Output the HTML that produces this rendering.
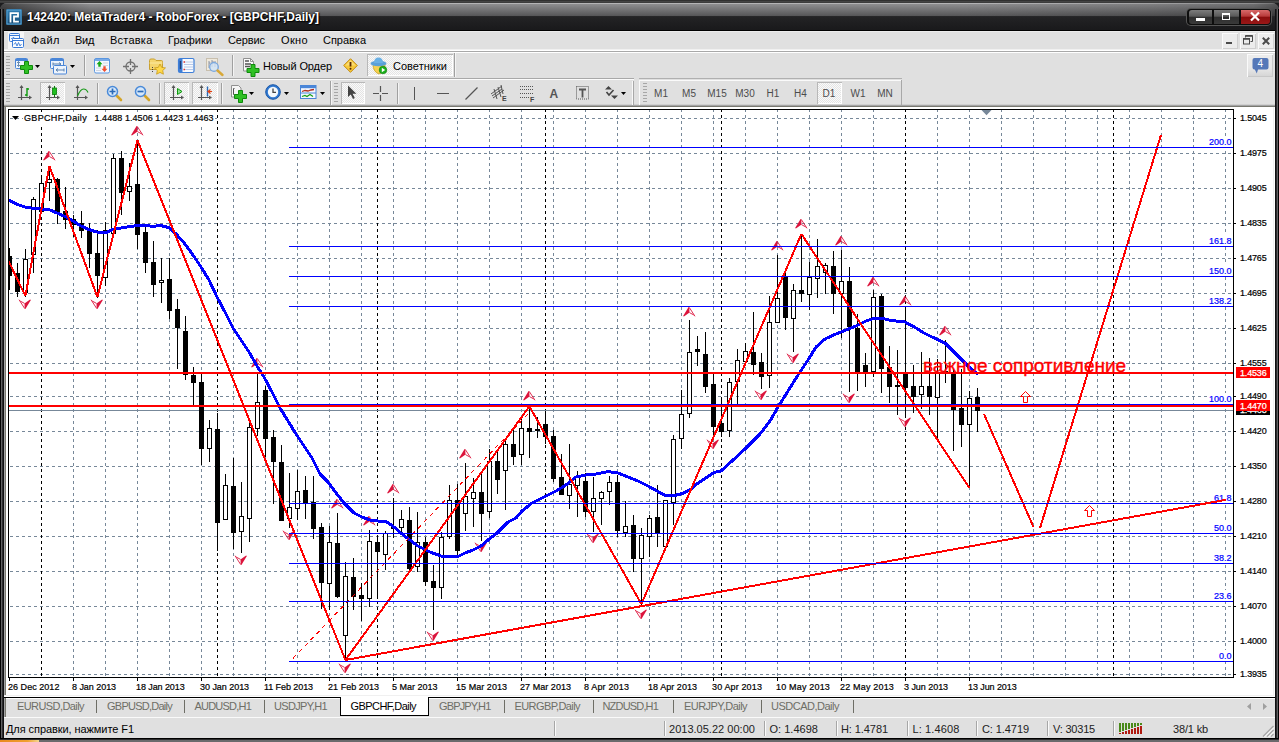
<!DOCTYPE html>
<html lang="ru"><head><meta charset="utf-8"><title>142420: MetaTrader4 - RoboForex - [GBPCHF,Daily]</title>
<style>
html,body{margin:0;padding:0}
body{width:1279px;height:742px;overflow:hidden;position:relative;background:#1a1a1a;font-family:"Liberation Sans",sans-serif;}
.t{position:absolute;white-space:pre;margin:0;padding:0}
.r{position:absolute}
svg{position:absolute;left:0;top:0}
.ic{position:absolute;overflow:visible}
</style></head><body>
<div class="r" style="left:0px;top:0px;width:1279px;height:742px;background:#1c1c1e;"></div>
<div class="r" style="left:0px;top:0px;width:1279px;height:1px;background:#303030;"></div>
<div class="r" style="left:0px;top:1px;width:1279px;height:1px;background:#444;"></div>
<div class="r" style="left:0px;top:2px;width:1279px;height:1px;background:#3c3c3c;"></div>
<div class="r" style="left:0px;top:3px;width:1279px;height:28px;background:linear-gradient(#b4b4b6 0,#b4b4b6 1px,#8e8e90 1px,#555557 13px,#2a2a2c 13px,#232325 14px,#1a1a1c 26px,#1a1a1c 27px,#000 27px);border-radius:7px 7px 0 0;"></div>
<div class="r" style="left:0px;top:3px;width:90px;height:13px;background:linear-gradient(90deg,rgba(0,0,0,.5) 0,rgba(0,0,0,.35) 30%,rgba(0,0,0,0) 100%);border-radius:7px 0 0 0;"></div>
<div class="r" style="left:960px;top:3px;width:319px;height:13px;background:linear-gradient(90deg,rgba(0,0,0,0) 0,rgba(0,0,0,.1) 60%,rgba(0,0,0,.22) 92%,rgba(0,0,0,.4) 100%);border-radius:0 7px 0 0;"></div>
<div class="r" style="left:0px;top:9px;width:4px;height:733px;background:linear-gradient(90deg,#000 0,#000 1px,#606062 1px,#606062 2px,#2c2c2e 2px,#2c2c2e 3px,#101012 3px);"></div>
<div class="r" style="left:1275px;top:9px;width:4px;height:733px;background:linear-gradient(90deg,#101012 0,#101012 1px,#2c2c2e 1px,#2c2c2e 2px,#606062 2px,#606062 3px,#000 3px);"></div>
<div class="r" style="left:0px;top:738px;width:1279px;height:4px;background:linear-gradient(#000 0,#000 1px,#2c2c2e 1px,#2c2c2e 2px,#6a6a6c 2px,#6a6a6c 4px);"></div>
<div class="r" style="left:0px;top:740px;width:39px;height:2px;background:linear-gradient(90deg,#e88a20 0,#f0a030 70%,#f4d890 100%);"></div>
<svg class="ic" style="left:6px;top:9px" width="16" height="16" viewBox="0 0 16 16"><defs><linearGradient id="ig" x1="0" y1="0" x2="0" y2="1"><stop offset="0" stop-color="#2f7fb4"/><stop offset="1" stop-color="#144a76"/></linearGradient></defs><rect x="0" y="0" width="16" height="16" rx="1.5" fill="#155a8a"/><rect x="1" y="1" width="14" height="14" fill="url(#ig)" stroke="#62a6d4" stroke-width="1"/><path d="M4.500 13.500V4.200h7.500v3.300H8v5.200h4.900" fill="none" stroke="#fff" stroke-width="1.800"/></svg>
<span class="t " style="left:27px;top:9px;font-size:12px;line-height:16px;color:#fff;letter-spacing:-0.001px;font-weight:bold;text-shadow:1px 1px 1px #000,0 0 2px #000;">142420: MetaTrader4 - RoboForex - [GBPCHF,Daily]</span>
<div class="r" style="left:1187px;top:9px;width:84px;height:16px;border-radius:4px;background:#0e0e0e;box-shadow:0 0 0 1px #555"></div>
<div class="r" style="left:1189px;top:10px;width:23px;height:14px;background:linear-gradient(#7c7c7c 0,#5a5a5a 45%,#2e2e2e 50%,#3a3a3a 100%);border-radius:3px 0 0 3px;"></div>
<div class="r" style="left:1214px;top:10px;width:25px;height:14px;background:linear-gradient(#7c7c7c 0,#5a5a5a 45%,#2e2e2e 50%,#3a3a3a 100%);"></div>
<div class="r" style="left:1241px;top:10px;width:29px;height:14px;background:linear-gradient(#d86a6a 0,#b83a3a 45%,#8a0c0c 50%,#9a1818 100%);border-radius:0 3px 3px 0;"></div>
<div class="r" style="left:1196px;top:18px;width:9px;height:3px;background:#fff;"></div>
<div class="r" style="left:1222px;top:13px;width:6px;height:4px;border:1.5px solid #fff;border-top-width:2.5px"></div>
<svg class="ic" style="left:1250px;top:12px" width="10" height="9" viewBox="0 0 10 9"><path d="M1 0.5L9 8.5M9 0.5L1 8.5" stroke="#fff" stroke-width="2.2"/></svg>
<div class="r" style="left:4px;top:31px;width:1271px;height:1px;background:#ececec;"></div>
<div class="r" style="left:4px;top:32px;width:1271px;height:17px;background:#e0e0e0;"></div>
<div class="r" style="left:4px;top:49px;width:1271px;height:1px;background:#f0f0f0;"></div>
<div class="r" style="left:4px;top:50px;width:1271px;height:1px;background:#fff;"></div>
<div class="r" style="left:4px;top:51px;width:1271px;height:1px;background:#a8a8a8;"></div>
<div class="r" style="left:4px;top:52px;width:1271px;height:1px;background:#fff;"></div>
<div class="r" style="left:8px;top:32px;width:16px;height:17px;background:#f6f6f6;"></div>
<svg class="ic" style="left:9px;top:33px" width="15" height="15" viewBox="0 0 15 15" fill="none" stroke="#3a7ad6"><rect x="0.5" y="0.5" width="10" height="8" rx="1" fill="#f4f8ff"/><path d="M0.5 2.500h10"/><path d="M2 5.500h1.500l1-1.500 1 3 1-1.500h1" stroke-width=".8"/><rect x="3.5" y="5.5" width="11" height="9" rx="1" fill="#fafcff"/><path d="M3.500 7.500h11"/><path d="M5 11.500l1.500-2 1.500 3.500 1.500-3.500 1.500 3.500 1.500-2" stroke-width=".9"/></svg>
<span class="t " style="left:31px;top:33px;font-size:11px;line-height:15px;color:#000;letter-spacing:0.488px;">Файл</span>
<span class="t " style="left:75px;top:33px;font-size:11px;line-height:15px;color:#000;letter-spacing:-0.302px;">Вид</span>
<span class="t " style="left:110px;top:33px;font-size:11px;line-height:15px;color:#000;letter-spacing:0.230px;">Вставка</span>
<span class="t " style="left:168px;top:33px;font-size:11px;line-height:15px;color:#000;letter-spacing:0.040px;">Графики</span>
<span class="t " style="left:228px;top:33px;font-size:11px;line-height:15px;color:#000;letter-spacing:-0.112px;">Сервис</span>
<span class="t " style="left:281px;top:33px;font-size:11px;line-height:15px;color:#000;letter-spacing:0.355px;">Окно</span>
<span class="t " style="left:323px;top:33px;font-size:11px;line-height:15px;color:#000;letter-spacing:-0.022px;">Справка</span>
<div class="r" style="left:1222px;top:33px;width:16px;height:16px;background:#ececec;box-shadow:inset 1px 1px 0 #fafafa, inset -1px -1px 0 #cfcfcf;"></div>
<div class="r" style="left:1240px;top:33px;width:16px;height:16px;background:#ececec;box-shadow:inset 1px 1px 0 #fafafa, inset -1px -1px 0 #cfcfcf;"></div>
<div class="r" style="left:1258px;top:33px;width:16px;height:16px;background:#ececec;box-shadow:inset 1px 1px 0 #fafafa, inset -1px -1px 0 #cfcfcf;"></div>
<div class="r" style="left:1226px;top:42px;width:6px;height:2px;background:#4a4a4a;"></div>
<svg class="ic" style="left:1243px;top:35px" width="10" height="10" viewBox="0 0 10 10" fill="none" stroke="#4a4a4a"><path d="M2.5 2.5v-2h7v6h-2" stroke-width="1"/><path d="M2.5 1h7" stroke-width="1.6"/><rect x="0.5" y="3.5" width="6" height="5.5"/><path d="M0.5 4h6" stroke-width="1.6"/></svg>
<svg class="ic" style="left:1262px;top:37px" width="8" height="8" viewBox="0 0 8 8"><path d="M0.8 0.8L7.2 7.2M7.2 0.8L0.8 7.2" stroke="#4a4a4a" stroke-width="2"/></svg>
<div class="r" style="left:4px;top:53px;width:1271px;height:27px;background:#e0e0e0;"></div>
<div class="r" style="left:4px;top:78px;width:630px;height:1px;background:#a8a8a8;"></div>
<div class="r" style="left:4px;top:79px;width:630px;height:1px;background:#fbfbfb;"></div>
<div class="r" style="left:639px;top:78px;width:263px;height:1px;background:#b0b0b0;"></div>
<div class="r" style="left:4px;top:78px;width:0px;height:0px;background:#e0e0e0;"></div>
<div class="r" style="left:4px;top:80px;width:1271px;height:25px;background:#e0e0e0;"></div>
<div class="r" style="left:4px;top:104px;width:1271px;height:1px;background:#d0d0d0;"></div>
<div class="r" style="left:4px;top:105px;width:1271px;height:1px;background:#a4a4a4;"></div>
<div class="r" style="left:4px;top:106px;width:1271px;height:1px;background:#787870;"></div>
<div class="r" style="left:6px;top:56px;width:4px;height:20px;background:repeating-linear-gradient(#a6a6a6 0,#a6a6a6 1px,transparent 1px,transparent 3px);"></div>
<div class="r" style="left:6px;top:83px;width:4px;height:20px;background:repeating-linear-gradient(#a6a6a6 0,#a6a6a6 1px,transparent 1px,transparent 3px);"></div>
<svg class="ic" style="left:15px;top:58px" width="17" height="16" viewBox="0 0 17 16"><rect x="0.5" y="0.5" width="12" height="10" rx="1" fill="#eef4fc" stroke="#4a86d8"/><path d="M0.5 2h12" stroke="#4a86d8" stroke-width="2"/><path d="M3.5 3.5v5M2 5l1.5-1.5L5 5M2 7l1.5 1.5L5 7" stroke="#6a8cb0" fill="none"/><path d="M9.5 3.5h4v4h4v4h-4v4h-4v-4h-4v-4h4z" fill="#2fc024" stroke="#0e8a0c" stroke-width="1"/></svg>
<svg class="ic" style="left:35px;top:65px" width="5" height="3" viewBox="0 0 5 3"><path d="M0 0h5L2.5 3z" fill="#000"/></svg>
<svg class="ic" style="left:50px;top:58px" width="18" height="17" viewBox="0 0 18 17"><rect x="0.5" y="0.5" width="13" height="10" rx="1" fill="#eef4fc" stroke="#4a86d8"/><path d="M0.5 2h13" stroke="#4a86d8" stroke-width="2"/><path d="M3 6h8M9 4.5l2 1.5-2 1.5M3 4.5v3" stroke="#5a82b0" fill="none"/><rect x="3.5" y="7.5" width="13" height="8.5" rx="1" fill="#eef4fc" stroke="#4a86d8"/><path d="M6 12h8M8 10.5l-2 1.5 2 1.5M14 10.5v3" stroke="#5a82b0" fill="none"/></svg>
<svg class="ic" style="left:70px;top:65px" width="5" height="3" viewBox="0 0 5 3"><path d="M0 0h5L2.5 3z" fill="#000"/></svg>
<div class="r" style="left:84px;top:55px;width:1px;height:21px;background:#a0a0a0;"></div>
<div class="r" style="left:85px;top:55px;width:1px;height:21px;background:#f4f4f4;"></div>
<svg class="ic" style="left:94px;top:58px" width="17" height="16" viewBox="0 0 17 16"><rect x="0.5" y="0.5" width="15" height="14.5" rx="1.5" fill="#f4f8ff" stroke="#5a96e0"/><path d="M0.5 2h15" stroke="#5a96e0" stroke-width="1.6"/><path d="M9 5h5M9 7.5h5M2 10h5M2 12.5h5" stroke="#d0d6e0"/><path d="M5.5 3l3 3.2h-1.8v2.6h-2.4V6.200h-1.800z" fill="#18a818"/><path d="M10.5 14l-3-3.2h1.800V8.200h2.400v2.600h1.800z" fill="#f05030"/></svg>
<svg class="ic" style="left:123px;top:59px" width="16" height="16" viewBox="0 0 16 16"><circle cx="7.500" cy="7.500" r="4.500" fill="none" stroke="#707070" stroke-width="1.300"/><path d="M7.500 0v6M7.500 9v6M0 7.500h6M9 7.500h6" stroke="#707070" stroke-width="1.300"/></svg>
<svg class="ic" style="left:149px;top:58px" width="18" height="17" viewBox="0 0 18 17"><path d="M0.5 2.500q0-1.500 1.500-1.500h3.500l1.500 1.500h5.500q1 0 1 1v8h-13z" fill="#f5d670" stroke="#c9a030"/><path d="M0.500 5h13" stroke="#fbe9a0"/><path d="M11 6l1.700 3.400 3.800.5-2.800 2.600.7 3.700-3.400-1.800-3.400 1.800.7-3.700-2.800-2.600 3.800-.5z" fill="#ffd84a" stroke="#c89a18" stroke-width=".8"/><path d="M3.500 9v6" stroke="#444" stroke-dasharray="1 1"/></svg>
<svg class="ic" style="left:178px;top:58px" width="17" height="16" viewBox="0 0 17 16"><rect x="0.5" y="0.5" width="15.500" height="14" rx="1.500" fill="#f8fbff" stroke="#3f7fd8" stroke-width="1.200"/><rect x="1" y="1" width="3.500" height="13" fill="#3f7fd8"/><path d="M6 4h9M6 6.500h9M6 9h9M6 11.500h9" stroke="#b8c8e8"/><path d="M2.500 3v8" stroke="#203a70" stroke-width="1.400"/><path d="M5.500 4h1.500M5.500 11.500h1.500" stroke="#e03030" stroke-width="1.400"/></svg>
<svg class="ic" style="left:206px;top:58px" width="19" height="18" viewBox="0 0 19 18"><rect x="0.500" y="0.500" width="11" height="12" fill="#efe9dc" stroke="#c8bfae"/><path d="M3 3v7M3 5h1.500M6 2v7M6 4h2M9 3v6" stroke="#8a94a8"/><circle cx="8" cy="9" r="4.300" fill="#cfe3f8" fill-opacity=".800" stroke="#7aa8e0" stroke-width="1.300"/><path d="M11.500 12.500l5 4.500" stroke="#d8a838" stroke-width="2.400" stroke-linecap="round"/></svg>
<div class="r" style="left:232px;top:55px;width:1px;height:21px;background:#a0a0a0;"></div>
<div class="r" style="left:233px;top:55px;width:1px;height:21px;background:#f4f4f4;"></div>
<svg class="ic" style="left:243px;top:58px" width="17" height="17" viewBox="0 0 17 17"><path d="M0.500 0.500h7l3 3v9.500h-10z" fill="#fafafa" stroke="#909090"/><path d="M7.500 0.500v3h3" fill="none" stroke="#909090"/><path d="M2 3h4M2 6h6M2 8.500h5" stroke="#555" stroke-width="1.300"/><path d="M8 6.5h4v4h4v4h-4v4h-4v-4h-4v-4h4z" fill="#2fc024" stroke="#0e8a0c" stroke-width="1"/></svg>
<span class="t " style="left:263px;top:58.5px;font-size:11px;line-height:15px;color:#000;letter-spacing:-0.102px;">Новый Ордер</span>
<svg class="ic" style="left:343px;top:58px" width="16" height="16" viewBox="0 0 16 16"><path d="M7.500 0.700L14.300 7.500 7.500 14.300 0.700 7.500z" fill="#f7c93a" stroke="#c28a10" stroke-linejoin="round"/><path d="M7.500 2.200L12.800 7.500H2.200z" fill="#fde58a" opacity=".700"/><path d="M7.500 4v4.500" stroke="#5a2a00" stroke-width="1.800"/><circle cx="7.500" cy="10.700" r="1" fill="#5a2a00"/></svg>
<div class="r" style="left:367px;top:54px;width:86px;height:22px;background:#f2f2f2;box-shadow:inset 1px 1px 0 #b8b8b8, inset -1px -1px 0 #fff;background-image:repeating-conic-gradient(#e4e4e4 0 25%,#fafafa 0 50%);background-size:2px 2px;"></div>
<svg class="ic" style="left:370px;top:57px" width="18" height="18" viewBox="0 0 18 18"><path d="M3 7q0 8 6 10 6-2 6-10z" fill="#f5d050" stroke="#c8a028" stroke-width=".800"/><ellipse cx="8.500" cy="6.500" rx="8" ry="2.800" fill="#5aa0d8"/><path d="M4 6q0-5.500 4.500-5.500T13 6z" fill="#6ab0e4"/><circle cx="13" cy="13" r="3.800" fill="#1cb01c" stroke="#0a7a0a" stroke-width=".600"/><path d="M11.800 10.800v4.400l3.400-2.200z" fill="#fff"/></svg>
<span class="t " style="left:393px;top:58.5px;font-size:11px;line-height:15px;color:#000;letter-spacing:0.028px;">Советники</span>
<div class="r" style="left:454px;top:53px;width:1px;height:24px;background:#a0a0a0;"></div>
<div class="r" style="left:455px;top:53px;width:1px;height:24px;background:#f4f4f4;"></div>
<svg class="ic" style="left:18px;top:85px" width="15" height="16" viewBox="0 0 15 16"><path d="M3.500 1v14M0 12.500h13" stroke="#555" stroke-width="1.200" fill="none"/><path d="M3.500 0l-2 3h4zM14 12.500l-3-2v4z" fill="#555"/><path d="M9 3v8.500M9 4h2M7 10h2" stroke="#0c9a0c" stroke-width="1.400" fill="none"/></svg>
<div class="r" style="left:40px;top:82px;width:25px;height:22px;background:#f2f2f2;box-shadow:inset 1px 1px 0 #b8b8b8, inset -1px -1px 0 #fff;background-image:repeating-conic-gradient(#e4e4e4 0 25%,#fafafa 0 50%);background-size:2px 2px;"></div>
<svg class="ic" style="left:46px;top:85px" width="15" height="16" viewBox="0 0 15 16"><path d="M3.500 1v14M0 12.500h13" stroke="#555" stroke-width="1.200" fill="none"/><path d="M3.500 0l-2 3h4zM14 12.500l-3-2v4z" fill="#555"/><path d="M8.500 1v11" stroke="#0a7a0a"/><rect x="6.500" y="3" width="4" height="6.500" fill="#20c020" stroke="#0a7a0a" stroke-width=".800"/></svg>
<svg class="ic" style="left:74px;top:85px" width="15" height="16" viewBox="0 0 15 16"><path d="M3.500 1v14M0 12.500h13" stroke="#555" stroke-width="1.200" fill="none"/><path d="M3.500 0l-2 3h4zM14 12.500l-3-2v4z" fill="#555"/><path d="M3.500 11q3-7 6-7t4.500 3.500" stroke="#1a9a1a" stroke-width="1.200" fill="none"/></svg>
<div class="r" style="left:97px;top:83px;width:1px;height:21px;background:#a0a0a0;"></div>
<div class="r" style="left:98px;top:83px;width:1px;height:21px;background:#f4f4f4;"></div>
<svg class="ic" style="left:106px;top:85px" width="16" height="16" viewBox="0 0 16 16"><path d="M10.500 10.500l4.500 4.500" stroke="#d4a428" stroke-width="2.600" stroke-linecap="round"/><circle cx="6.500" cy="6.500" r="5" fill="#d6e8fa" stroke="#4a8ad8" stroke-width="1.500"/><path d="M3.500 6.500h6M6.500 3.500v6" stroke="#2a6ab8" stroke-width="1.700"/></svg>
<svg class="ic" style="left:134px;top:85px" width="16" height="16" viewBox="0 0 16 16"><path d="M10.500 10.500l4.500 4.500" stroke="#d4a428" stroke-width="2.600" stroke-linecap="round"/><circle cx="6.500" cy="6.500" r="5" fill="#d6e8fa" stroke="#4a8ad8" stroke-width="1.500"/><path d="M3.500 6.500h6" stroke="#2a6ab8" stroke-width="1.700"/></svg>
<div class="r" style="left:159px;top:83px;width:1px;height:21px;background:#a0a0a0;"></div>
<div class="r" style="left:160px;top:83px;width:1px;height:21px;background:#f4f4f4;"></div>
<div class="r" style="left:164px;top:82px;width:25px;height:22px;background:#f2f2f2;box-shadow:inset 1px 1px 0 #b8b8b8, inset -1px -1px 0 #fff;background-image:repeating-conic-gradient(#e4e4e4 0 25%,#fafafa 0 50%);background-size:2px 2px;"></div>
<svg class="ic" style="left:170px;top:85px" width="15" height="16" viewBox="0 0 15 16"><path d="M3.500 1v14M0 12.500h13" stroke="#555" stroke-width="1.200" fill="none"/><path d="M3.500 0l-2 3h4zM14 12.500l-3-2v4z" fill="#555"/><path d="M7.500 3.500v6l4.500-3z" fill="#8ee08e" stroke="#0c9a0c"/></svg>
<div class="r" style="left:192px;top:82px;width:26px;height:22px;background:#f2f2f2;box-shadow:inset 1px 1px 0 #b8b8b8, inset -1px -1px 0 #fff;background-image:repeating-conic-gradient(#e4e4e4 0 25%,#fafafa 0 50%);background-size:2px 2px;"></div>
<svg class="ic" style="left:198px;top:85px" width="15" height="16" viewBox="0 0 15 16"><path d="M3.500 1v14M0 12.500h13" stroke="#555" stroke-width="1.200" fill="none"/><path d="M3.500 0l-2 3h4zM14 12.500l-3-2v4z" fill="#555"/><path d="M9.500 1.500v10" stroke="#2a6ab8" stroke-width="1.400"/><path d="M14 6.500h-3.500M12.500 4.500l-2.500 2 2.500 2" stroke="#e04010" stroke-width="1.200" fill="none"/></svg>
<div class="r" style="left:221px;top:83px;width:1px;height:21px;background:#a0a0a0;"></div>
<div class="r" style="left:222px;top:83px;width:1px;height:21px;background:#f4f4f4;"></div>
<svg class="ic" style="left:231px;top:85px" width="17" height="18" viewBox="0 0 17 18"><path d="M0.500 0.500h7l2.500 2.500v9h-9.500z" fill="#f6f6f6" stroke="#909090"/><path d="M3.500 3.500h-1v6h1" stroke="#555" fill="none"/><path d="M7.5 5.5h4v4h4v4h-4v4h-4v-4h-4v-4h4z" fill="#2fc024" stroke="#0e8a0c" stroke-width="1"/></svg>
<svg class="ic" style="left:249px;top:92px" width="5" height="3" viewBox="0 0 5 3"><path d="M0 0h5L2.5 3z" fill="#000"/></svg>
<svg class="ic" style="left:265px;top:84px" width="17" height="17" viewBox="0 0 17 17"><circle cx="8" cy="8" r="7.300" fill="#2f78d0" stroke="#1c58a8"/><circle cx="8" cy="8" r="5.200" fill="#f4f8fc"/><path d="M8 4.500v3.800h3" stroke="#444" stroke-width="1.300" fill="none"/></svg>
<svg class="ic" style="left:284px;top:92px" width="5" height="3" viewBox="0 0 5 3"><path d="M0 0h5L2.5 3z" fill="#000"/></svg>
<svg class="ic" style="left:300px;top:85px" width="17" height="15" viewBox="0 0 17 15"><rect x="0.500" y="0.500" width="15.500" height="13" fill="#f4f8ff" stroke="#4a86d8"/><path d="M0.500 2h15.500" stroke="#4a86d8" stroke-width="2.400"/><path d="M2 6.500l3-1 3 .5 3-1 3-.5" stroke="#b03020" stroke-width="1.300" fill="none"/><path d="M0.500 8h15.500" stroke="#4a86d8"/><path d="M2 11.500l3-1 2 1 3-2 3 2" stroke="#18a018" stroke-width="1.300" fill="none"/></svg>
<svg class="ic" style="left:320px;top:92px" width="5" height="3" viewBox="0 0 5 3"><path d="M0 0h5L2.5 3z" fill="#000"/></svg>
<div class="r" style="left:330px;top:81px;width:1px;height:24px;background:#a0a0a0;"></div>
<div class="r" style="left:331px;top:81px;width:1px;height:24px;background:#f4f4f4;"></div>
<div class="r" style="left:334px;top:83px;width:4px;height:20px;background:repeating-linear-gradient(#a6a6a6 0,#a6a6a6 1px,transparent 1px,transparent 3px);"></div>
<div class="r" style="left:341px;top:82px;width:24px;height:22px;background:#f2f2f2;box-shadow:inset 1px 1px 0 #b8b8b8, inset -1px -1px 0 #fff;background-image:repeating-conic-gradient(#e4e4e4 0 25%,#fafafa 0 50%);background-size:2px 2px;"></div>
<svg class="ic" style="left:347px;top:85px" width="10" height="15" viewBox="0 0 10 15"><path d="M1 0.500v11.500l2.800-2.600 2.200 4.600 1.800-.9-2.200-4.400h3.800z" fill="#444"/></svg>
<svg class="ic" style="left:373px;top:86px" width="15" height="15" viewBox="0 0 15 15"><path d="M7.500 0v6M7.500 9v6M0 7.500h6M9 7.500h6" stroke="#555" stroke-width="1.200"/></svg>
<div class="r" style="left:397px;top:83px;width:1px;height:21px;background:#a0a0a0;"></div>
<div class="r" style="left:398px;top:83px;width:1px;height:21px;background:#f4f4f4;"></div>
<div class="r" style="left:414px;top:87px;width:1px;height:13px;background:#555;"></div>
<div class="r" style="left:437px;top:93px;width:12px;height:1px;background:#555;"></div>
<svg class="ic" style="left:465px;top:87px" width="13" height="13" viewBox="0 0 13 13"><path d="M0.500 12.500L12.500 0.500" stroke="#555" stroke-width="1.200"/></svg>
<svg class="ic" style="left:490px;top:84px" width="19" height="18" viewBox="0 0 19 18"><path d="M1 10L12 2M3 14L14 6M2 12l10-7M4 5l3 10M8 3l3 10M11 1l2 9" stroke="#555" stroke-width="1" fill="none"/><text x="12" y="17" font-size="7" font-weight="bold" fill="#444" font-family="Liberation Sans,sans-serif">E</text></svg>
<svg class="ic" style="left:520px;top:85px" width="16" height="17" viewBox="0 0 16 17"><path d="M0 1.500h13M0 4.500h13M0 8.500h13M0 12.500h10" stroke="#555" stroke-dasharray="1 1"/><text x="10" y="16.500" font-size="7" font-weight="bold" fill="#444" font-family="Liberation Sans,sans-serif">F</text></svg>
<span class="t " style="left:549.5px;top:85.5px;font-size:12px;line-height:16px;color:#555;letter-spacing:1.328px;font-weight:bold;">A</span>
<svg class="ic" style="left:576px;top:85px" width="14" height="15" viewBox="0 0 14 15"><rect x="0.500" y="1.500" width="12" height="12.500" fill="none" stroke="#555" stroke-dasharray="1 1"/><path d="M3 4.500h7M6.500 4.500v8" stroke="#555" stroke-width="1.800"/></svg>
<svg class="ic" style="left:604px;top:86px" width="15" height="14" viewBox="0 0 15 14"><path d="M4.500 0l3.500 3.500h-7zM10.500 13l3.500-3.500h-7z" fill="#444"/><path d="M2.500 6l2.500 3 4.500-5" stroke="#444" stroke-width="1.600" fill="none"/></svg>
<svg class="ic" style="left:621px;top:92px" width="5" height="3" viewBox="0 0 5 3"><path d="M0 0h5L2.5 3z" fill="#000"/></svg>
<div class="r" style="left:632px;top:81px;width:1px;height:24px;background:#f8f8f8;"></div>
<div class="r" style="left:633px;top:81px;width:1px;height:24px;background:#a8a8a8;"></div>
<div class="r" style="left:639px;top:80px;width:1px;height:25px;background:#fafafa;"></div>
<div class="r" style="left:640px;top:80px;width:261px;height:1px;background:#fafafa;"></div>
<div class="r" style="left:901px;top:80px;width:1px;height:25px;background:#a8a8a8;"></div>
<div class="r" style="left:643px;top:83px;width:4px;height:20px;background:repeating-linear-gradient(#a6a6a6 0,#a6a6a6 1px,transparent 1px,transparent 3px);"></div>
<span class="t " style="left:654.055px;top:86.5px;font-size:10px;line-height:14px;color:#4c4c4c;">M1</span>
<span class="t " style="left:682.055px;top:86.5px;font-size:10px;line-height:14px;color:#4c4c4c;">M5</span>
<span class="t " style="left:707.273px;top:86.5px;font-size:10px;line-height:14px;color:#4c4c4c;">M15</span>
<span class="t " style="left:735.273px;top:86.5px;font-size:10px;line-height:14px;color:#4c4c4c;">M30</span>
<span class="t " style="left:766.609px;top:86.5px;font-size:10px;line-height:14px;color:#4c4c4c;">H1</span>
<span class="t " style="left:794.109px;top:86.5px;font-size:10px;line-height:14px;color:#4c4c4c;">H4</span>
<span class="t " style="left:850.5px;top:86.5px;font-size:10px;line-height:14px;color:#4c4c4c;">W1</span>
<span class="t " style="left:877.227px;top:86.5px;font-size:10px;line-height:14px;color:#4c4c4c;">MN</span>
<div class="r" style="left:817px;top:82px;width:25px;height:22px;background:#f2f2f2;box-shadow:inset 1px 1px 0 #b8b8b8, inset -1px -1px 0 #fff;background-image:repeating-conic-gradient(#e4e4e4 0 25%,#fafafa 0 50%);background-size:2px 2px;"></div>
<span class="t " style="left:822.609px;top:86.5px;font-size:10px;line-height:14px;color:#4c4c4c;">D1</span>
<div class="r" style="left:1247px;top:54px;width:26px;height:23px;background:#e9e9e9;box-shadow:inset 1px 1px 0 #fafafa, inset -1px -1px 0 #c8c8c8;background:linear-gradient(#ececec 0,#e8e8e8 60%,#d4d4d4 100%)"></div>
<svg class="ic" style="left:1252px;top:58px" width="17" height="16" viewBox="0 0 17 16"><path d="M2 0h12.500q2 0 2 2v7.500q0 2-2 2h-8.500l-1.200 4-2-4h-0.300q-2 0-2-2v-7.500q0-2 2-2z" fill="#5578b8"/><text x="8.300" y="9.300" font-size="10" fill="#fff" text-anchor="middle" font-family="Liberation Sans,sans-serif">4</text></svg>
<div class="r" style="left:4px;top:107px;width:1271px;height:590px;background:#fff;"></div>
<div class="r" style="left:4px;top:107px;width:1px;height:590px;background:#a4a4a4;"></div>
<div class="r" style="left:5px;top:107px;width:1px;height:590px;background:#787870;"></div>
<div class="r" style="left:1273px;top:107px;width:1px;height:589px;background:#f0f0f0;"></div>
<div class="r" style="left:4px;top:695px;width:1270px;height:1px;background:#f0f0f0;"></div>
<div class="r" style="left:4px;top:696px;width:1271px;height:1px;background:#fff;"></div>
<div class="r" style="left:4px;top:697px;width:1271px;height:1px;background:#000;"></div>
<div class="r" style="left:4px;top:698px;width:1271px;height:1px;background:#fff;"></div>
<div class="r" style="left:4px;top:699px;width:1271px;height:18px;background:#e0e0e0;"></div>
<div class="r" style="left:4px;top:698px;width:1px;height:19px;background:#a4a4a4;"></div>
<div class="r" style="left:5px;top:698px;width:1px;height:19px;background:#787870;"></div>
<div class="r" style="left:4px;top:717px;width:1271px;height:1px;background:#fafafa;"></div>
<div class="r" style="left:4px;top:718px;width:1271px;height:20px;background:#e0e0e0;"></div>
<span class="t " style="left:17px;top:699px;font-size:11px;line-height:15px;color:#6e6e66;letter-spacing:-0.578px;">EURUSD,Daily</span>
<span class="t " style="left:107px;top:699px;font-size:11px;line-height:15px;color:#6e6e66;letter-spacing:-0.747px;">GBPUSD,Daily</span>
<span class="t " style="left:194.5px;top:699px;font-size:11px;line-height:15px;color:#6e6e66;letter-spacing:-0.785px;">AUDUSD,H1</span>
<span class="t " style="left:274px;top:699px;font-size:11px;line-height:15px;color:#6e6e66;letter-spacing:-0.679px;">USDJPY,H1</span>
<span class="t " style="left:439px;top:699px;font-size:11px;line-height:15px;color:#6e6e66;letter-spacing:-0.849px;">GBPJPY,H1</span>
<span class="t " style="left:514.5px;top:699px;font-size:11px;line-height:15px;color:#6e6e66;letter-spacing:-0.587px;">EURGBP,Daily</span>
<span class="t " style="left:602.5px;top:699px;font-size:11px;line-height:15px;color:#6e6e66;letter-spacing:-0.826px;">NZDUSD,H1</span>
<span class="t " style="left:684px;top:699px;font-size:11px;line-height:15px;color:#6e6e66;letter-spacing:-0.540px;">EURJPY,Daily</span>
<span class="t " style="left:771px;top:699px;font-size:11px;line-height:15px;color:#6e6e66;letter-spacing:-0.495px;">USDCAD,Daily</span>
<div class="r" style="left:96px;top:700px;width:1px;height:13px;background:#6e6e66;"></div>
<div class="r" style="left:184px;top:700px;width:1px;height:13px;background:#6e6e66;"></div>
<div class="r" style="left:264px;top:700px;width:1px;height:13px;background:#6e6e66;"></div>
<div class="r" style="left:504px;top:700px;width:1px;height:13px;background:#6e6e66;"></div>
<div class="r" style="left:592.5px;top:700px;width:1px;height:13px;background:#6e6e66;"></div>
<div class="r" style="left:672.5px;top:700px;width:1px;height:13px;background:#6e6e66;"></div>
<div class="r" style="left:760.5px;top:700px;width:1px;height:13px;background:#6e6e66;"></div>
<div class="r" style="left:852.5px;top:700px;width:1px;height:13px;background:#6e6e66;"></div>
<div class="r" style="left:340px;top:697px;width:89px;height:19px;background:#fff;border:1px solid #000;border-top:none;box-sizing:border-box;"></div>
<div class="r" style="left:341px;top:696px;width:87px;height:2px;background:#fff;"></div>
<span class="t " style="left:350.5px;top:699px;font-size:11px;line-height:15px;color:#000;letter-spacing:-0.552px;">GBPCHF,Daily</span>
<svg class="ic" style="left:1246px;top:703px" width="22" height="8" viewBox="0 0 22 8"><path d="M5 0v7l-4-3.500zM17 0v7l4-3.500z" fill="#a0a0a0"/></svg>
<span class="t " style="left:6px;top:721.5px;font-size:11px;line-height:15px;color:#000;letter-spacing:-0.075px;">Для справки, нажмите F1</span>
<div class="r" style="left:554px;top:721px;width:1px;height:15px;background:#a6a6a6;"></div>
<div class="r" style="left:555px;top:721px;width:1px;height:15px;background:#fafafa;"></div>
<div class="r" style="left:664px;top:721px;width:1px;height:15px;background:#a6a6a6;"></div>
<div class="r" style="left:665px;top:721px;width:1px;height:15px;background:#fafafa;"></div>
<div class="r" style="left:764px;top:721px;width:1px;height:15px;background:#a6a6a6;"></div>
<div class="r" style="left:765px;top:721px;width:1px;height:15px;background:#fafafa;"></div>
<div class="r" style="left:836px;top:721px;width:1px;height:15px;background:#a6a6a6;"></div>
<div class="r" style="left:837px;top:721px;width:1px;height:15px;background:#fafafa;"></div>
<div class="r" style="left:907px;top:721px;width:1px;height:15px;background:#a6a6a6;"></div>
<div class="r" style="left:908px;top:721px;width:1px;height:15px;background:#fafafa;"></div>
<div class="r" style="left:976px;top:721px;width:1px;height:15px;background:#a6a6a6;"></div>
<div class="r" style="left:977px;top:721px;width:1px;height:15px;background:#fafafa;"></div>
<div class="r" style="left:1047px;top:721px;width:1px;height:15px;background:#a6a6a6;"></div>
<div class="r" style="left:1048px;top:721px;width:1px;height:15px;background:#fafafa;"></div>
<div class="r" style="left:1113px;top:721px;width:1px;height:15px;background:#a6a6a6;"></div>
<div class="r" style="left:1114px;top:721px;width:1px;height:15px;background:#fafafa;"></div>
<span class="t " style="left:669px;top:721.5px;font-size:11px;line-height:15px;color:#222;letter-spacing:0.016px;">2013.05.22 00:00</span>
<span class="t " style="left:769.5px;top:721.5px;font-size:11px;line-height:15px;color:#222;letter-spacing:0.014px;">O: 1.4698</span>
<span class="t " style="left:841px;top:721.5px;font-size:11px;line-height:15px;color:#222;letter-spacing:-0.083px;">H: 1.4781</span>
<span class="t " style="left:912.5px;top:721.5px;font-size:11px;line-height:15px;color:#222;letter-spacing:0.118px;">L: 1.4608</span>
<span class="t " style="left:982px;top:721.5px;font-size:11px;line-height:15px;color:#222;letter-spacing:-0.083px;">C: 1.4719</span>
<span class="t " style="left:1053px;top:721.5px;font-size:11px;line-height:15px;color:#222;letter-spacing:-0.211px;">V: 30315</span>
<span class="t " style="left:1173px;top:721.5px;font-size:11px;line-height:15px;color:#222;letter-spacing:-0.161px;">38/1 kb</span>
<svg class="ic" style="left:1119px;top:723px" width="24" height="12" viewBox="0 0 24 12"><rect x="0" y="0" width="2" height="9" fill="#4a8a1a"/><rect x="0" y="10" width="2" height="1" fill="#b01a10"/><rect x="3" y="0" width="2" height="8" fill="#4a8a1a"/><rect x="3" y="9" width="2" height="2" fill="#b01a10"/><rect x="6" y="0" width="2" height="7" fill="#4a8a1a"/><rect x="6" y="8" width="2" height="3" fill="#b01a10"/><rect x="9" y="0" width="2" height="6" fill="#4a8a1a"/><rect x="9" y="7" width="2" height="4" fill="#b01a10"/><rect x="12" y="0" width="2" height="5" fill="#4a8a1a"/><rect x="12" y="6" width="2" height="5" fill="#b01a10"/><rect x="15" y="0" width="2" height="4" fill="#4a8a1a"/><rect x="15" y="5" width="2" height="6" fill="#b01a10"/><rect x="18" y="0" width="2" height="3" fill="#4a8a1a"/><rect x="18" y="4" width="2" height="7" fill="#b01a10"/><rect x="21" y="0" width="2" height="2" fill="#4a8a1a"/><rect x="21" y="3" width="2" height="8" fill="#b01a10"/></svg>
<svg class="ic" style="left:1262px;top:725px" width="12" height="12" viewBox="0 0 12 12"><path d="M11.500 1L1 11.500M11.500 5L5 11.500M11.500 9L9 11.500" stroke="#a8a8a8" stroke-width="1.400"/><path d="M12 2.500L2.500 12M12 6.500L6.500 12" stroke="#fff" stroke-width="1"/></svg>
<svg width="1279" height="742" viewBox="0 0 1279 742"><rect x="8.5" y="109.5" width="1225" height="568" fill="#fff" stroke="#000" stroke-width="1"/><g shape-rendering="crispEdges"><path d="M10 118.5H1233M10 153.5H1233M10 188.5H1233M10 223.5H1233M10 258.5H1233M10 293.5H1233M10 328.5H1233M10 363.5H1233M10 396.5H1233M10 431.5H1233M10 466.5H1233M10 501.5H1233M10 536.5H1233M10 571.5H1233M10 606.5H1233M10 641.5H1233M10 674.5H1233" stroke="#778899" stroke-width="1" stroke-dasharray="3 3" fill="none"/><path d="M73.5 110V677M105.5 110V677M137.5 110V677M169.5 110V677M201.5 110V677M233.5 110V677M265.5 110V677M297.5 110V677M329.5 110V677M361.5 110V677M393.5 110V677M425.5 110V677M457.5 110V677M489.5 110V677M521.5 110V677M553.5 110V677M585.5 110V677M617.5 110V677M649.5 110V677M681.5 110V677M713.5 110V677M745.5 110V677M777.5 110V677M809.5 110V677M841.5 110V677M873.5 110V677M937.5 110V677M969.5 110V677M1001.5 110V677M1033.5 110V677M1065.5 110V677M1097.5 110V677M1129.5 110V677M1161.5 110V677M1193.5 110V677M1225.5 110V677" stroke="#778899" stroke-width="1" stroke-dasharray="3 3" stroke-dashoffset="1" fill="none"/><path d="M41.5 110V677M217.5 110V677M377.5 110V677M545.5 110V677M721.5 110V677M905.5 110V677M1113.5 110V677" stroke="#000" stroke-width="1" stroke-dasharray="3 3" stroke-dashoffset="1" fill="none"/><path d="M9 410.5H1233" stroke="#778899" stroke-width="1"/><clipPath id="cc"><rect x="9" y="110" width="1224" height="567"/></clipPath><g clip-path="url(#cc)"><path d="M9.5 248V290M17.5 263V297M25.5 249V297M33.5 197V273M41.5 176V212M49.5 166V201M57.5 178V224M65.5 187V229M73.5 215V237M81.5 211V238M89.5 223V268M97.5 230V298M105.5 222V286M113.5 154V234M121.5 151V215M129.5 163V201M137.5 141V249M145.5 226V273M153.5 241V297M161.5 258V303M169.5 258V319M177.5 299V369M185.5 316V380M193.5 367V406M201.5 372V465M209.5 420V462M217.5 413V551M225.5 474V520M233.5 458V549M241.5 482V553M249.5 423V542M257.5 373V436M265.5 386V457M273.5 430V504M281.5 445V521M289.5 473V528M297.5 470V520M305.5 476V519M313.5 476V539M321.5 523V609M329.5 526V610M337.5 513V598M345.5 562V660M353.5 558V610M361.5 583V621M369.5 530V607M377.5 535V599M385.5 531V570M393.5 498V538M401.5 510V532M409.5 507V571M417.5 512V572M425.5 537V586M433.5 565V630M441.5 532V599M449.5 485V539M457.5 484V558M465.5 463V531M473.5 478V527M481.5 474V541M489.5 449V518M497.5 451V494M505.5 440V510M513.5 430V465M521.5 417V465M529.5 407V458M537.5 417V438M545.5 411V444M553.5 430V482M561.5 454V495M569.5 444V509M577.5 471V517M585.5 473V517M593.5 477V532M601.5 491V525M609.5 476V505M617.5 475V537M625.5 501V537M633.5 515V572M641.5 528V605M649.5 515V557M657.5 485V547M665.5 500V548M673.5 435V525M681.5 390V449M689.5 320V418M697.5 336V366M705.5 332V393M713.5 374V437M721.5 397V437M729.5 378V437M737.5 349V405M745.5 343V363M753.5 312V375M761.5 353V389M769.5 296V388M777.5 255V323M785.5 272V330M793.5 284V352M801.5 234V302M809.5 262V310M817.5 239V298M825.5 263V294M833.5 251V314M841.5 250V338M849.5 267V392M857.5 314V391M865.5 353V387M873.5 290V377M881.5 294V393M889.5 346V403M897.5 350V415M905.5 306V418M913.5 365V413M921.5 352V409M929.5 358V415M937.5 359V439M945.5 340V383M953.5 369V451M961.5 369V447M969.5 391V488M977.5 388V432" stroke="#000" stroke-width="1" fill="none"/><path d="M7 256h5v20h-5zM15 273h5v19h-5zM55 179h5v34h-5zM63 211h5v9h-5zM71 219h5v6h-5zM79 223h5v8h-5zM87 230h5v24h-5zM95 253h5v23h-5zM119 158h5v35h-5zM135 184h5v51h-5zM143 232h5v31h-5zM151 262h5v23h-5zM167 279h5v32h-5zM175 309h5v19h-5zM183 331h5v44h-5zM191 375h5v8h-5zM199 382h5v67h-5zM215 429h5v94h-5zM231 486h5v47h-5zM263 390h5v49h-5zM271 437h5v25h-5zM279 462h5v59h-5zM303 490h5v14h-5zM311 502h5v27h-5zM319 527h5v56h-5zM335 543h5v54h-5zM351 577h5v20h-5zM359 595h5v4h-5zM375 542h5v10h-5zM391 526h5v3h-5zM407 520h5v49h-5zM423 542h5v40h-5zM431 581h5v7h-5zM455 500h5v51h-5zM479 492h5v22h-5zM495 461h5v19h-5zM511 444h5v13h-5zM527 428h5v4h-5zM535 429h5v2h-5zM543 424h5v13h-5zM551 436h5v43h-5zM559 477h5v18h-5zM583 481h5v31h-5zM615 482h5v49h-5zM631 525h5v34h-5zM655 517h5v17h-5zM695 349h5v3h-5zM703 354h5v33h-5zM711 384h5v43h-5zM719 423h5v9h-5zM751 352h5v13h-5zM759 362h5v15h-5zM783 276h5v42h-5zM799 290h5v4h-5zM831 266h5v28h-5zM847 281h5v46h-5zM855 328h5v45h-5zM863 365h5v8h-5zM879 296h5v73h-5zM887 367h5v20h-5zM895 385h5v2h-5zM903 374h5v14h-5zM911 386h5v11h-5zM927 386h5v11h-5zM943 371h5v3h-5zM951 373h5v37h-5zM959 408h5v17h-5zM975 397h5v14h-5z" fill="#000"/><path d="M23.5 259.5h4v33h-4zM31.5 199.5h4v55h-4zM39.5 183.5h4v28h-4zM47.5 179.5h4v3h-4zM103.5 230.5h4v47h-4zM111.5 158.5h4v75h-4zM127.5 186.5h4v5h-4zM159.5 280.5h4v2h-4zM207.5 428.5h4v20h-4zM223.5 485.5h4v34h-4zM239.5 516.5h4v15h-4zM247.5 427.5h4v91h-4zM255.5 402.5h4v26h-4zM287.5 507.5h4v11h-4zM295.5 491.5h4v17h-4zM327.5 542.5h4v41h-4zM343.5 576.5h4v59h-4zM367.5 541.5h4v57h-4zM383.5 533.5h4v21h-4zM399.5 519.5h4v8h-4zM415.5 542.5h4v24h-4zM439.5 537.5h4v50h-4zM447.5 500.5h4v36h-4zM463.5 496.5h4v17h-4zM471.5 492.5h4v6h-4zM487.5 461.5h4v50h-4zM503.5 444.5h4v26h-4zM519.5 428.5h4v26h-4zM567.5 484.5h4v11h-4zM575.5 477.5h4v8h-4zM591.5 498.5h4v13h-4zM599.5 492.5h4v6h-4zM607.5 482.5h4v9h-4zM623.5 526.5h4v6h-4zM639.5 535.5h4v23h-4zM647.5 518.5h4v18h-4zM663.5 500.5h4v46h-4zM671.5 439.5h4v63h-4zM679.5 414.5h4v24h-4zM687.5 352.5h4v61h-4zM727.5 382.5h4v48h-4zM735.5 360.5h4v21h-4zM743.5 351.5h4v10h-4zM767.5 322.5h4v53h-4zM775.5 298.5h4v24h-4zM791.5 290.5h4v28h-4zM807.5 277.5h4v17h-4zM815.5 266.5h4v12h-4zM823.5 265.5h4v7h-4zM839.5 281.5h4v12h-4zM871.5 297.5h4v74h-4zM919.5 386.5h4v8h-4zM935.5 372.5h4v25h-4zM967.5 398.5h4v26h-4z" fill="#fff" stroke="#000" stroke-width="1"/><g shape-rendering="geometricPrecision" transform="translate(43,151)"><path d="M5.600 0L0 9.200 1.300 9.300 6.500 5.600 6.300 .300Z" fill="#dc143c"/><path d="M6.300 .500L12 9.300M6.500 5.600L10.800 8" stroke="#dc143c" stroke-width=".9" fill="none"/></g><g shape-rendering="geometricPrecision" transform="translate(131,126)"><path d="M5.600 0L0 9.200 1.300 9.300 6.500 5.600 6.300 .300Z" fill="#dc143c"/><path d="M6.300 .500L12 9.300M6.500 5.600L10.800 8" stroke="#dc143c" stroke-width=".9" fill="none"/></g><g shape-rendering="geometricPrecision" transform="translate(251,358)"><path d="M5.600 0L0 9.200 1.300 9.300 6.500 5.600 6.300 .300Z" fill="#dc143c"/><path d="M6.300 .500L12 9.300M6.500 5.600L10.800 8" stroke="#dc143c" stroke-width=".9" fill="none"/></g><g shape-rendering="geometricPrecision" transform="translate(331,499)"><path d="M5.600 0L0 9.200 1.300 9.300 6.500 5.600 6.300 .300Z" fill="#dc143c"/><path d="M6.300 .500L12 9.300M6.500 5.600L10.800 8" stroke="#dc143c" stroke-width=".9" fill="none"/></g><g shape-rendering="geometricPrecision" transform="translate(363,516)"><path d="M5.600 0L0 9.200 1.300 9.300 6.500 5.600 6.300 .300Z" fill="#dc143c"/><path d="M6.300 .500L12 9.300M6.500 5.600L10.800 8" stroke="#dc143c" stroke-width=".9" fill="none"/></g><g shape-rendering="geometricPrecision" transform="translate(387,484)"><path d="M5.600 0L0 9.200 1.300 9.300 6.500 5.600 6.300 .300Z" fill="#dc143c"/><path d="M6.300 .500L12 9.300M6.500 5.600L10.800 8" stroke="#dc143c" stroke-width=".9" fill="none"/></g><g shape-rendering="geometricPrecision" transform="translate(459,449)"><path d="M5.600 0L0 9.200 1.300 9.300 6.500 5.600 6.300 .300Z" fill="#dc143c"/><path d="M6.300 .500L12 9.300M6.500 5.600L10.800 8" stroke="#dc143c" stroke-width=".9" fill="none"/></g><g shape-rendering="geometricPrecision" transform="translate(523,391)"><path d="M5.600 0L0 9.200 1.300 9.300 6.500 5.600 6.300 .300Z" fill="#dc143c"/><path d="M6.300 .500L12 9.300M6.500 5.600L10.800 8" stroke="#dc143c" stroke-width=".9" fill="none"/></g><g shape-rendering="geometricPrecision" transform="translate(683,307)"><path d="M5.600 0L0 9.200 1.300 9.300 6.500 5.600 6.300 .300Z" fill="#dc143c"/><path d="M6.300 .500L12 9.300M6.500 5.600L10.800 8" stroke="#dc143c" stroke-width=".9" fill="none"/></g><g shape-rendering="geometricPrecision" transform="translate(771,241)"><path d="M5.600 0L0 9.200 1.300 9.300 6.500 5.600 6.300 .300Z" fill="#dc143c"/><path d="M6.300 .500L12 9.300M6.500 5.600L10.800 8" stroke="#dc143c" stroke-width=".9" fill="none"/></g><g shape-rendering="geometricPrecision" transform="translate(795,219)"><path d="M5.600 0L0 9.200 1.300 9.300 6.500 5.600 6.300 .300Z" fill="#dc143c"/><path d="M6.300 .500L12 9.300M6.500 5.600L10.800 8" stroke="#dc143c" stroke-width=".9" fill="none"/></g><g shape-rendering="geometricPrecision" transform="translate(835,236)"><path d="M5.600 0L0 9.200 1.300 9.300 6.500 5.600 6.300 .300Z" fill="#dc143c"/><path d="M6.300 .500L12 9.300M6.500 5.600L10.800 8" stroke="#dc143c" stroke-width=".9" fill="none"/></g><g shape-rendering="geometricPrecision" transform="translate(867,277)"><path d="M5.600 0L0 9.200 1.300 9.300 6.500 5.600 6.300 .300Z" fill="#dc143c"/><path d="M6.300 .500L12 9.300M6.500 5.600L10.800 8" stroke="#dc143c" stroke-width=".9" fill="none"/></g><g shape-rendering="geometricPrecision" transform="translate(899,296)"><path d="M5.600 0L0 9.200 1.300 9.300 6.500 5.600 6.300 .300Z" fill="#dc143c"/><path d="M6.300 .500L12 9.300M6.500 5.600L10.800 8" stroke="#dc143c" stroke-width=".9" fill="none"/></g><g shape-rendering="geometricPrecision" transform="translate(939,326)"><path d="M5.600 0L0 9.200 1.300 9.300 6.500 5.600 6.300 .300Z" fill="#dc143c"/><path d="M6.300 .500L12 9.300M6.500 5.600L10.800 8" stroke="#dc143c" stroke-width=".9" fill="none"/></g><g shape-rendering="geometricPrecision" transform="translate(31,309) scale(-1,-1)"><path d="M5.600 0L0 9.200 1.300 9.300 6.500 5.600 6.300 .300Z" fill="#dc143c"/><path d="M6.300 .500L12 9.300M6.500 5.600L10.800 8" stroke="#dc143c" stroke-width=".9" fill="none"/></g><g shape-rendering="geometricPrecision" transform="translate(103,309) scale(-1,-1)"><path d="M5.600 0L0 9.200 1.300 9.300 6.500 5.600 6.300 .300Z" fill="#dc143c"/><path d="M6.300 .500L12 9.300M6.500 5.600L10.800 8" stroke="#dc143c" stroke-width=".9" fill="none"/></g><g shape-rendering="geometricPrecision" transform="translate(247,565) scale(-1,-1)"><path d="M5.600 0L0 9.200 1.300 9.300 6.500 5.600 6.300 .300Z" fill="#dc143c"/><path d="M6.300 .500L12 9.300M6.500 5.600L10.800 8" stroke="#dc143c" stroke-width=".9" fill="none"/></g><g shape-rendering="geometricPrecision" transform="translate(295,540) scale(-1,-1)"><path d="M5.600 0L0 9.200 1.300 9.300 6.500 5.600 6.300 .300Z" fill="#dc143c"/><path d="M6.300 .500L12 9.300M6.500 5.600L10.800 8" stroke="#dc143c" stroke-width=".9" fill="none"/></g><g shape-rendering="geometricPrecision" transform="translate(351,673) scale(-1,-1)"><path d="M5.600 0L0 9.200 1.300 9.300 6.500 5.600 6.300 .300Z" fill="#dc143c"/><path d="M6.300 .500L12 9.300M6.500 5.600L10.800 8" stroke="#dc143c" stroke-width=".9" fill="none"/></g><g shape-rendering="geometricPrecision" transform="translate(439,641) scale(-1,-1)"><path d="M5.600 0L0 9.200 1.300 9.300 6.500 5.600 6.300 .300Z" fill="#dc143c"/><path d="M6.300 .500L12 9.300M6.500 5.600L10.800 8" stroke="#dc143c" stroke-width=".9" fill="none"/></g><g shape-rendering="geometricPrecision" transform="translate(487,552) scale(-1,-1)"><path d="M5.600 0L0 9.200 1.300 9.300 6.500 5.600 6.300 .300Z" fill="#dc143c"/><path d="M6.300 .500L12 9.300M6.500 5.600L10.800 8" stroke="#dc143c" stroke-width=".9" fill="none"/></g><g shape-rendering="geometricPrecision" transform="translate(599,543) scale(-1,-1)"><path d="M5.600 0L0 9.200 1.300 9.300 6.500 5.600 6.300 .300Z" fill="#dc143c"/><path d="M6.300 .500L12 9.300M6.500 5.600L10.800 8" stroke="#dc143c" stroke-width=".9" fill="none"/></g><g shape-rendering="geometricPrecision" transform="translate(647,619) scale(-1,-1)"><path d="M5.600 0L0 9.200 1.300 9.300 6.500 5.600 6.300 .300Z" fill="#dc143c"/><path d="M6.300 .500L12 9.300M6.500 5.600L10.800 8" stroke="#dc143c" stroke-width=".9" fill="none"/></g><g shape-rendering="geometricPrecision" transform="translate(719,449) scale(-1,-1)"><path d="M5.600 0L0 9.200 1.300 9.300 6.500 5.600 6.300 .300Z" fill="#dc143c"/><path d="M6.300 .500L12 9.300M6.500 5.600L10.800 8" stroke="#dc143c" stroke-width=".9" fill="none"/></g><g shape-rendering="geometricPrecision" transform="translate(767,400) scale(-1,-1)"><path d="M5.600 0L0 9.200 1.300 9.300 6.500 5.600 6.300 .300Z" fill="#dc143c"/><path d="M6.300 .500L12 9.300M6.500 5.600L10.800 8" stroke="#dc143c" stroke-width=".9" fill="none"/></g><g shape-rendering="geometricPrecision" transform="translate(799,363) scale(-1,-1)"><path d="M5.600 0L0 9.200 1.300 9.300 6.500 5.600 6.300 .300Z" fill="#dc143c"/><path d="M6.300 .500L12 9.300M6.500 5.600L10.800 8" stroke="#dc143c" stroke-width=".9" fill="none"/></g><g shape-rendering="geometricPrecision" transform="translate(855,403) scale(-1,-1)"><path d="M5.600 0L0 9.200 1.300 9.300 6.500 5.600 6.300 .300Z" fill="#dc143c"/><path d="M6.300 .500L12 9.300M6.500 5.600L10.800 8" stroke="#dc143c" stroke-width=".9" fill="none"/></g><g shape-rendering="geometricPrecision" transform="translate(911,427) scale(-1,-1)"><path d="M5.600 0L0 9.200 1.300 9.300 6.500 5.600 6.300 .300Z" fill="#dc143c"/><path d="M6.300 .500L12 9.300M6.500 5.600L10.800 8" stroke="#dc143c" stroke-width=".9" fill="none"/></g><polyline points="9,200 17,204.4 25,207 33,208.4 41,209 49,209.6 57,213 65,216.4 73,221 81,226 89,229.6 97,232 105,233 113,229.4 121,228 129,226.6 137,225.6 145,225.6 153,226.2 161,225.6 169,227.6 177,235 185,244 193,255 201,267 209,280 217,297 225,312 233,328 241,340 249,352 257,366 264,377 272,392 280,408 288,421 296,434 304,446 312,458 320,474 328,482 336,493 345,504 354,513 362,517 370,520 378,521 386,521.4 394,527 402,534 410,540 418,546 430,552 441,556 457,557 465,553 473,550 481,546 488,540 496,534 508,522 516,518 522,511 532,503 544,497 556,491 566,485 576,477 586,475 596,474 608,471.6 618,473 628,477 638,481 648,486 658,491.6 666,495.6 674,495.6 682,493.6 690,490 698,483 706,478 714,472.4 721,471 732,461 746,448 760,434 770,421 778,407 788,391 798,375 808,360 816,347 825,339 836,334 846,330 856,326 866,321 874,318.4 882,318.4 892,320.6 905,322 916,328 924,333 932,337 945,343 960,358 970,368 978,374" fill="none" stroke="#00f" stroke-width="3" stroke-linejoin="round"/><polyline points="1,245.4 25.4,296 49.4,166 97.4,297 137.4,140.4 345.4,660 529.4,406.4 641.4,604 801.4,234 969.4,488" fill="none" stroke="#f00" stroke-width="2" stroke-linejoin="bevel"/><path d="M345.4 660L1226 499.8" stroke="#f00" stroke-width="2" fill="none"/><path d="M984 414L1033.5 527" stroke="#f00" stroke-width="2" fill="none"/><path d="M1040 528L1161 135" stroke="#f00" stroke-width="2" fill="none"/><path d="M289.5 662L529 413" stroke="#f00" stroke-width="1" stroke-dasharray="4.300 4.300" stroke-dashoffset="4" fill="none"/><path d="M289 147.5H1233M289 246.5H1233M289 276.5H1233M289 306.5H1233M289 404.5H1233M289 503.5H1233M289 533.5H1233M289 563.5H1233M289 601.5H1233M289 661.5H1233" stroke="#00f" stroke-width="1" fill="none"/><path d="M9 373H1233M9 406H1233" stroke="#f00" stroke-width="2" fill="none"/></g><path d="M1234 118.5h2M1234 153.5h2M1234 188.5h2M1234 223.5h2M1234 258.5h2M1234 293.5h2M1234 328.5h2M1234 363.5h2M1234 396.5h2M1234 431.5h2M1234 466.5h2M1234 501.5h2M1234 536.5h2M1234 571.5h2M1234 606.5h2M1234 641.5h2M1234 674.5h2M9.5 678v3M73.5 678v3M137.5 678v3M201.5 678v3M265.5 678v3M329.5 678v3M393.5 678v3M457.5 678v3M521.5 678v3M585.5 678v3M649.5 678v3M713.5 678v3M777.5 678v3M841.5 678v3M905.5 678v3M969.5 678v3" stroke="#000" stroke-width="1" fill="none"/></g><path transform="translate(1020,391)" d="M5.500 .500L10.500 5.500H7.500V11.500H3.500V5.500H.500Z" fill="none" stroke="#f00" stroke-width="1" shape-rendering="geometricPrecision"/><path transform="translate(1084,505)" d="M5.500 .500L10.500 5.500H7.500V11.500H3.500V5.500H.500Z" fill="none" stroke="#f00" stroke-width="1" shape-rendering="geometricPrecision"/><path d="M981.500 110h10l-5 5.200z" fill="#778899"/><path d="M12 116h7l-3.500 4z" fill="#000"/></svg>
<span class="t " style="left:1240px;top:111.5px;font-size:9px;line-height:13px;color:#000;letter-spacing:-0.167px;-webkit-text-stroke:0.2px #000;">1.5045</span>
<span class="t " style="left:1240px;top:146.5px;font-size:9px;line-height:13px;color:#000;letter-spacing:-0.167px;-webkit-text-stroke:0.2px #000;">1.4975</span>
<span class="t " style="left:1240px;top:181.5px;font-size:9px;line-height:13px;color:#000;letter-spacing:-0.167px;-webkit-text-stroke:0.2px #000;">1.4905</span>
<span class="t " style="left:1240px;top:216.5px;font-size:9px;line-height:13px;color:#000;letter-spacing:-0.167px;-webkit-text-stroke:0.2px #000;">1.4835</span>
<span class="t " style="left:1240px;top:251.5px;font-size:9px;line-height:13px;color:#000;letter-spacing:-0.167px;-webkit-text-stroke:0.2px #000;">1.4765</span>
<span class="t " style="left:1240px;top:286.5px;font-size:9px;line-height:13px;color:#000;letter-spacing:-0.167px;-webkit-text-stroke:0.2px #000;">1.4695</span>
<span class="t " style="left:1240px;top:321.5px;font-size:9px;line-height:13px;color:#000;letter-spacing:-0.167px;-webkit-text-stroke:0.2px #000;">1.4625</span>
<span class="t " style="left:1240px;top:356.5px;font-size:9px;line-height:13px;color:#000;letter-spacing:-0.167px;-webkit-text-stroke:0.2px #000;">1.4555</span>
<span class="t " style="left:1240px;top:389.5px;font-size:9px;line-height:13px;color:#000;letter-spacing:-0.167px;-webkit-text-stroke:0.2px #000;">1.4490</span>
<span class="t " style="left:1240px;top:424.5px;font-size:9px;line-height:13px;color:#000;letter-spacing:-0.167px;-webkit-text-stroke:0.2px #000;">1.4420</span>
<span class="t " style="left:1240px;top:459.5px;font-size:9px;line-height:13px;color:#000;letter-spacing:-0.167px;-webkit-text-stroke:0.2px #000;">1.4350</span>
<span class="t " style="left:1240px;top:494.5px;font-size:9px;line-height:13px;color:#000;letter-spacing:-0.167px;-webkit-text-stroke:0.2px #000;">1.4280</span>
<span class="t " style="left:1240px;top:529.5px;font-size:9px;line-height:13px;color:#000;letter-spacing:-0.167px;-webkit-text-stroke:0.2px #000;">1.4210</span>
<span class="t " style="left:1240px;top:564.5px;font-size:9px;line-height:13px;color:#000;letter-spacing:-0.167px;-webkit-text-stroke:0.2px #000;">1.4140</span>
<span class="t " style="left:1240px;top:599.5px;font-size:9px;line-height:13px;color:#000;letter-spacing:-0.167px;-webkit-text-stroke:0.2px #000;">1.4070</span>
<span class="t " style="left:1240px;top:634.5px;font-size:9px;line-height:13px;color:#000;letter-spacing:-0.167px;-webkit-text-stroke:0.2px #000;">1.4000</span>
<span class="t " style="left:1240px;top:667.5px;font-size:9px;line-height:13px;color:#000;letter-spacing:-0.167px;-webkit-text-stroke:0.2px #000;">1.3935</span>
<div class="r" style="left:1208px;top:136px;width:25px;height:11px;background:#fff;"></div>
<span class="t " style="left:1209px;top:136px;font-size:9px;line-height:13px;color:#00f;-webkit-text-stroke:0.2px #00f;">200.0</span>
<div class="r" style="left:1208px;top:235px;width:25px;height:11px;background:#fff;"></div>
<span class="t " style="left:1209px;top:235px;font-size:9px;line-height:13px;color:#00f;-webkit-text-stroke:0.2px #00f;">161.8</span>
<div class="r" style="left:1208px;top:265px;width:25px;height:11px;background:#fff;"></div>
<span class="t " style="left:1209px;top:265px;font-size:9px;line-height:13px;color:#00f;-webkit-text-stroke:0.2px #00f;">150.0</span>
<div class="r" style="left:1208px;top:295px;width:25px;height:11px;background:#fff;"></div>
<span class="t " style="left:1209px;top:295px;font-size:9px;line-height:13px;color:#00f;-webkit-text-stroke:0.2px #00f;">138.2</span>
<div class="r" style="left:1208px;top:393px;width:25px;height:11px;background:#fff;"></div>
<span class="t " style="left:1209px;top:393px;font-size:9px;line-height:13px;color:#00f;-webkit-text-stroke:0.2px #00f;">100.0</span>
<div class="r" style="left:1213px;top:492px;width:20px;height:11px;background:#fff;"></div>
<span class="t " style="left:1214px;top:492px;font-size:9px;line-height:13px;color:#00f;-webkit-text-stroke:0.2px #00f;">61.8</span>
<div class="r" style="left:1213px;top:522px;width:20px;height:11px;background:#fff;"></div>
<span class="t " style="left:1214px;top:522px;font-size:9px;line-height:13px;color:#00f;-webkit-text-stroke:0.2px #00f;">50.0</span>
<div class="r" style="left:1213px;top:552px;width:20px;height:11px;background:#fff;"></div>
<span class="t " style="left:1214px;top:552px;font-size:9px;line-height:13px;color:#00f;-webkit-text-stroke:0.2px #00f;">38.2</span>
<div class="r" style="left:1213px;top:590px;width:20px;height:11px;background:#fff;"></div>
<span class="t " style="left:1214px;top:590px;font-size:9px;line-height:13px;color:#00f;-webkit-text-stroke:0.2px #00f;">23.6</span>
<div class="r" style="left:1218px;top:650px;width:15px;height:11px;background:#fff;"></div>
<span class="t " style="left:1219px;top:650px;font-size:9px;line-height:13px;color:#00f;-webkit-text-stroke:0.2px #00f;">0.0</span>
<span class="t " style="left:8px;top:680.5px;font-size:9px;line-height:13px;color:#000;letter-spacing:0.036px;-webkit-text-stroke:0.2px #000;">26 Dec 2012</span>
<span class="t " style="left:72px;top:680.5px;font-size:9px;line-height:13px;color:#000;letter-spacing:-0.050px;-webkit-text-stroke:0.2px #000;">8 Jan 2013</span>
<span class="t " style="left:136px;top:680.5px;font-size:9px;line-height:13px;color:#000;letter-spacing:-0.091px;-webkit-text-stroke:0.2px #000;">18 Jan 2013</span>
<span class="t " style="left:200px;top:680.5px;font-size:9px;line-height:13px;color:#000;letter-spacing:-0.045px;-webkit-text-stroke:0.2px #000;">30 Jan 2013</span>
<span class="t " style="left:264px;top:680.5px;font-size:9px;line-height:13px;color:#000;letter-spacing:-0.075px;-webkit-text-stroke:0.2px #000;">11 Feb 2013</span>
<span class="t " style="left:328px;top:680.5px;font-size:9px;line-height:13px;color:#000;letter-spacing:0.045px;-webkit-text-stroke:0.2px #000;">21 Feb 2013</span>
<span class="t " style="left:392px;top:680.5px;font-size:9px;line-height:13px;color:#000;letter-spacing:0.000px;-webkit-text-stroke:0.2px #000;">5 Mar 2013</span>
<span class="t " style="left:456px;top:680.5px;font-size:9px;line-height:13px;color:#000;letter-spacing:0.045px;-webkit-text-stroke:0.2px #000;">15 Mar 2013</span>
<span class="t " style="left:520px;top:680.5px;font-size:9px;line-height:13px;color:#000;letter-spacing:0.045px;-webkit-text-stroke:0.2px #000;">27 Mar 2013</span>
<span class="t " style="left:584px;top:680.5px;font-size:9px;line-height:13px;color:#000;letter-spacing:0.150px;-webkit-text-stroke:0.2px #000;">8 Apr 2013</span>
<span class="t " style="left:648px;top:680.5px;font-size:9px;line-height:13px;color:#000;letter-spacing:0.045px;-webkit-text-stroke:0.2px #000;">18 Apr 2013</span>
<span class="t " style="left:712px;top:680.5px;font-size:9px;line-height:13px;color:#000;letter-spacing:0.136px;-webkit-text-stroke:0.2px #000;">30 Apr 2013</span>
<span class="t " style="left:776px;top:680.5px;font-size:9px;line-height:13px;color:#000;letter-spacing:0.182px;-webkit-text-stroke:0.2px #000;">10 May 2013</span>
<span class="t " style="left:840px;top:680.5px;font-size:9px;line-height:13px;color:#000;letter-spacing:0.182px;-webkit-text-stroke:0.2px #000;">22 May 2013</span>
<span class="t " style="left:904px;top:680.5px;font-size:9px;line-height:13px;color:#000;letter-spacing:-0.050px;-webkit-text-stroke:0.2px #000;">3 Jun 2013</span>
<span class="t " style="left:968px;top:680.5px;font-size:9px;line-height:13px;color:#000;letter-spacing:-0.082px;-webkit-text-stroke:0.2px #000;">13 Jun 2013</span>
<div class="r" style="left:23px;top:112px;width:192px;height:12px;background:#fff;"></div>
<span class="t " style="left:24px;top:111.5px;font-size:9px;line-height:13px;color:#000;letter-spacing:0.333px;-webkit-text-stroke:0.2px #000;">GBPCHF,Daily</span>
<span class="t " style="left:94.5px;top:111.5px;font-size:9px;line-height:13px;color:#000;letter-spacing:0.056px;-webkit-text-stroke:0.2px #000;">1.4488 1.4506 1.4423 1.4463</span>
<div class="r" style="left:1236px;top:404px;width:34px;height:11px;background:#000;"></div>
<span class="t " style="left:1240px;top:403.5px;font-size:9px;line-height:13px;color:#fff;letter-spacing:-0.167px;-webkit-text-stroke:0.25px #fff;">1.4463</span>
<div class="r" style="left:1236px;top:367px;width:34px;height:11px;background:#f00;"></div>
<span class="t " style="left:1240px;top:366.5px;font-size:9px;line-height:13px;color:#fff;letter-spacing:-0.167px;-webkit-text-stroke:0.25px #fff;">1.4536</span>
<div class="r" style="left:1236px;top:400px;width:34px;height:11px;background:#f00;"></div>
<span class="t " style="left:1240px;top:399.5px;font-size:9px;line-height:13px;color:#fff;letter-spacing:-0.167px;-webkit-text-stroke:0.25px #fff;">1.4470</span>
<span class="t " style="left:923px;top:353.5px;font-size:19px;line-height:23px;color:#f00;letter-spacing:-0.030px;-webkit-text-stroke:0.35px #f00;">важное сопротивление</span>
<svg width="1279" height="742" viewBox="0 0 1279 742" shape-rendering="crispEdges"><clipPath id="c2"><rect x="1200" y="480" width="33" height="40"/></clipPath><path clip-path="url(#c2)" d="M345.4 660L1226 499.8" stroke="#f00" stroke-width="2" fill="none"/></svg>
</body></html>
